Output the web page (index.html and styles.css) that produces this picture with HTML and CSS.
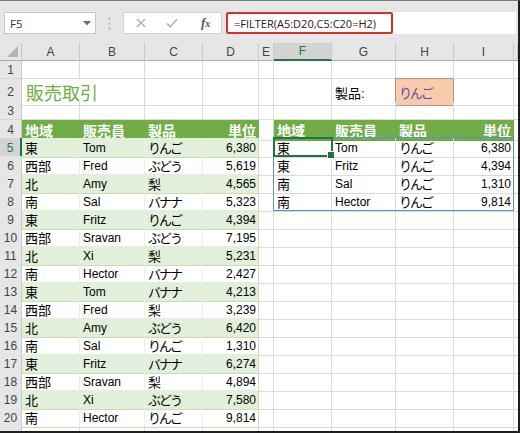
FILE: index.html
```html
<!DOCTYPE html>
<html lang="ja">
<head>
<meta charset="utf-8">
<link rel="stylesheet" href="styles.css">
</head>
<body>
<div class="app">
  <div class="toolbar">
    <div class="namebox"><span>F5</span><svg width="8" height="5" viewBox="0 0 8 5"><polygon points="0,0 8,0 4,4.5" fill="#6b6b6b"/></svg></div>
    <div class="sep"><svg width="3" height="13" viewBox="0 0 3 13"><circle cx="1.5" cy="1.5" r="1" fill="#a8a8a8"/><circle cx="1.5" cy="6.5" r="1" fill="#a8a8a8"/><circle cx="1.5" cy="11.5" r="1" fill="#a8a8a8"/></svg></div>
    <div class="fxbox">
      <svg class="ic-x" width="10" height="10" viewBox="0 0 10 10"><path d="M1 1L9 9M9 1L1 9" stroke="#a9a9a9" stroke-width="1.3" fill="none"/></svg>
      <svg class="ic-ok" width="12" height="10" viewBox="0 0 12 10"><path d="M1 5.5L4.3 8.8L11 1.2" stroke="#a9a9a9" stroke-width="1.3" fill="none"/></svg>
      <span class="fx">f<span class="fxs">x</span></span>
    </div>
    <div class="formula"><div class="hl">=FILTER(A5:D20,C5:C20=H2)</div></div>
  </div>
  <div class="sheet">
    <div class="r hdr">
      <div class="ch corner"><svg width="11" height="11" viewBox="0 0 11 11"><polygon points="11,0 11,11 0,11" fill="#b5b5b5"/></svg></div>
      <div class="ch">A</div><div class="ch">B</div><div class="ch">C</div><div class="ch">D</div><div class="ch">E</div>
      <div class="ch act">F</div><div class="ch">G</div><div class="ch">H</div><div class="ch">I</div><div class="ch"></div>
    </div>
    <div class="r">
      <div class="rh">1</div><div class="c"></div><div class="c"></div><div class="c"></div><div class="c"></div><div class="c"></div><div class="c"></div><div class="c"></div><div class="c"></div><div class="c"></div><div class="c x"></div>
    </div>
    <div class="r tall">
      <div class="rh">2</div><div class="c j title">販売取引</div><div class="c"></div><div class="c"></div><div class="c"></div><div class="c"></div><div class="c lbl">製品:</div><div class="c k h2">りんご</div><div class="c"></div><div class="c x"></div>
    </div>
    <div class="r">
      <div class="rh">3</div><div class="c"></div><div class="c"></div><div class="c"></div><div class="c"></div><div class="c"></div><div class="c"></div><div class="c"></div><div class="c"></div><div class="c"></div><div class="c x"></div>
    </div>
    <div class="r">
      <div class="rh">4</div><div class="c j th">地域</div><div class="c j th">販売員</div><div class="c j th">製品</div><div class="c j th n">単位</div><div class="c e"></div><div class="c j th">地域</div><div class="c j th">販売員</div><div class="c j th">製品</div><div class="c j th n">単位</div><div class="c x"></div>
    </div>
    <div class="r">
      <div class="rh act">5</div><div class="c j t b">東</div><div class="c t b">Tom</div><div class="c k t b">りんご</div><div class="c n t b d">6,380</div><div class="c e"></div>
      <div class="c j anchor">東<div class="spill"></div><div class="sel"></div></div><div class="c">Tom</div><div class="c k">りんご</div><div class="c n">6,380</div><div class="c x"></div>
    </div>
    <div class="r">
      <div class="rh">6</div><div class="c j t">西部</div><div class="c t">Fred</div><div class="c k t">ぶどう</div><div class="c n t d">5,619</div><div class="c e"></div>
      <div class="c j">東</div><div class="c">Fritz</div><div class="c k">りんご</div><div class="c n">4,394</div><div class="c x"></div>
    </div>
    <div class="r">
      <div class="rh">7</div><div class="c j t b">北</div><div class="c t b">Amy</div><div class="c j t b">梨</div><div class="c n t b d">4,565</div><div class="c e"></div>
      <div class="c j">南</div><div class="c">Sal</div><div class="c k">りんご</div><div class="c n">1,310</div><div class="c x"></div>
    </div>
    <div class="r">
      <div class="rh">8</div><div class="c j t">南</div><div class="c t">Sal</div><div class="c k t">バナナ</div><div class="c n t d">5,323</div><div class="c e"></div>
      <div class="c j">南</div><div class="c">Hector</div><div class="c k">りんご</div><div class="c n">9,814</div><div class="c x"></div>
    </div>
    <div class="r">
      <div class="rh">9</div><div class="c j t b">東</div><div class="c t b">Fritz</div><div class="c k t b">りんご</div><div class="c n t b d">4,394</div><div class="c e"></div>
      <div class="c"></div><div class="c"></div><div class="c"></div><div class="c"></div><div class="c x"></div>
    </div>
    <div class="r">
      <div class="rh">10</div><div class="c j t">西部</div><div class="c t">Sravan</div><div class="c k t">ぶどう</div><div class="c n t d">7,195</div><div class="c e"></div>
      <div class="c"></div><div class="c"></div><div class="c"></div><div class="c"></div><div class="c x"></div>
    </div>
    <div class="r">
      <div class="rh">11</div><div class="c j t b">北</div><div class="c t b">Xi</div><div class="c j t b">梨</div><div class="c n t b d">5,231</div><div class="c e"></div>
      <div class="c"></div><div class="c"></div><div class="c"></div><div class="c"></div><div class="c x"></div>
    </div>
    <div class="r">
      <div class="rh">12</div><div class="c j t">南</div><div class="c t">Hector</div><div class="c k t">バナナ</div><div class="c n t d">2,427</div><div class="c e"></div>
      <div class="c"></div><div class="c"></div><div class="c"></div><div class="c"></div><div class="c x"></div>
    </div>
    <div class="r">
      <div class="rh">13</div><div class="c j t b">東</div><div class="c t b">Tom</div><div class="c k t b">バナナ</div><div class="c n t b d">4,213</div><div class="c e"></div>
      <div class="c"></div><div class="c"></div><div class="c"></div><div class="c"></div><div class="c x"></div>
    </div>
    <div class="r">
      <div class="rh">14</div><div class="c j t">西部</div><div class="c t">Fred</div><div class="c j t">梨</div><div class="c n t d">3,239</div><div class="c e"></div>
      <div class="c"></div><div class="c"></div><div class="c"></div><div class="c"></div><div class="c x"></div>
    </div>
    <div class="r">
      <div class="rh">15</div><div class="c j t b">北</div><div class="c t b">Amy</div><div class="c k t b">ぶどう</div><div class="c n t b d">6,420</div><div class="c e"></div>
      <div class="c"></div><div class="c"></div><div class="c"></div><div class="c"></div><div class="c x"></div>
    </div>
    <div class="r">
      <div class="rh">16</div><div class="c j t">南</div><div class="c t">Sal</div><div class="c k t">りんご</div><div class="c n t d">1,310</div><div class="c e"></div>
      <div class="c"></div><div class="c"></div><div class="c"></div><div class="c"></div><div class="c x"></div>
    </div>
    <div class="r">
      <div class="rh">17</div><div class="c j t b">東</div><div class="c t b">Fritz</div><div class="c k t b">バナナ</div><div class="c n t b d">6,274</div><div class="c e"></div>
      <div class="c"></div><div class="c"></div><div class="c"></div><div class="c"></div><div class="c x"></div>
    </div>
    <div class="r">
      <div class="rh">18</div><div class="c j t">西部</div><div class="c t">Sravan</div><div class="c j t">梨</div><div class="c n t d">4,894</div><div class="c e"></div>
      <div class="c"></div><div class="c"></div><div class="c"></div><div class="c"></div><div class="c x"></div>
    </div>
    <div class="r">
      <div class="rh">19</div><div class="c j t b">北</div><div class="c t b">Xi</div><div class="c k t b">ぶどう</div><div class="c n t b d">7,580</div><div class="c e"></div>
      <div class="c"></div><div class="c"></div><div class="c"></div><div class="c"></div><div class="c x"></div>
    </div>
    <div class="r">
      <div class="rh">20</div><div class="c j t">南</div><div class="c t">Hector</div><div class="c k t">りんご</div><div class="c n t d">9,814</div><div class="c e"></div>
      <div class="c"></div><div class="c"></div><div class="c"></div><div class="c"></div><div class="c x"></div>
    </div>
    <div class="r">
      <div class="rh"></div><div class="c"></div><div class="c"></div><div class="c"></div><div class="c d"></div><div class="c e"></div>
      <div class="c"></div><div class="c"></div><div class="c"></div><div class="c"></div><div class="c x"></div>
    </div>
  </div>
</div>
</body>
</html>
```
FILE: styles.css
```css
* { box-sizing: border-box; }
body { margin: 0; background: #fff; }

.app {
  width: 520px;
  height: 433px;
  border-top: 1px solid #7a7a7a;
  border-right: 2px solid #1e1e1e;
  border-bottom: 2px solid #1e1e1e;
  background: #e6e6e6;
  overflow: hidden;
  font-family: "Liberation Sans", "Noto Sans CJK JP", sans-serif;
  font-size: 12px;
  color: #000;
}

/* ---------- formula toolbar ---------- */
.toolbar {
  height: 42px;
  display: flex;
  align-items: flex-start;
  padding: 11px 2px 0 4px;
}
.namebox {
  width: 92px;
  height: 22px;
  background: #fff;
  border: 1px solid #c6c6c6;
  display: flex;
  align-items: center;
  justify-content: space-between;
  padding: 0 4px 0 5px;
  font-family: "Open Sans", "Liberation Sans", sans-serif;
  font-size: 11.5px;
  color: #333;
}
.sep {
  width: 27px;
  height: 22px;
  display: flex;
  align-items: center;
  justify-content: center;
}
.fxbox {
  width: 99px;
  height: 22px;
  background: #fff;
  border: 1px solid #d2d2d2;
  display: flex;
  align-items: center;
  padding-left: 12px;
}
.ic-ok { margin-left: 20px; }
.fx {
  margin-left: 23px;
  font-family: "Liberation Serif", serif;
  font-style: italic;
  font-size: 13px;
  color: #555;
  font-weight: bold;
}
.fxs { font-size: 10px; }
.formula {
  flex: 1;
  height: 22px;
  margin-left: 4px;
  background: #fff;
  display: flex;
}
.hl {
  width: 167px;
  height: 22px;
  border: 2px solid #d5302a;
  border-radius: 2px;
  padding-left: 6px;
  display: flex;
  align-items: center;
  font-family: "Open Sans", "Liberation Sans", sans-serif;
  font-size: 11px;
  color: #222;
  white-space: nowrap;
}

/* ---------- sheet grid ---------- */
.sheet {
  height: 388px;
  background: #fff;
  overflow: hidden;
}
.r {
  display: grid;
  grid-template-columns: 22px 58px 65px 58px 56px 15px 58px 64px 58px 60px 4px;
  height: 18px;
}
.r.tall { height: 23px; }

.ch {
  background: #e6e6e6;
  border-right: 1px solid #c9c9c9;
  border-bottom: 1px solid #acacac;
  color: #444;
  display: flex;
  align-items: center;
  justify-content: center;
  font-size: 12px;
}
.ch.corner {
  align-items: flex-end;
  justify-content: flex-end;
  padding: 0 3px 3px 0;
}
.ch.act {
  background: #d3d3d3;
  color: #217346;
  border-bottom: 2px solid #217346;
}

.rh {
  background: #e6e6e6;
  color: #444;
  border-right: 1px solid #c9c9c9;
  border-bottom: 1px solid #d4d4d4;
  display: flex;
  align-items: center;
  justify-content: center;
}
.rh.act {
  background: #d3d3d3;
  color: #217346;
  border-right: 2px solid #217346;
}

.c {
  border-right: 1px solid #dadada;
  border-bottom: 1px solid #dadada;
  padding: 0 3px;
  display: flex;
  align-items: center;
  white-space: nowrap;
}
.c.x { padding: 0; border-right: 0; }
.n { justify-content: flex-end; padding-right: 2px; }
.j { font-size: 13px; }
.k {
  font-size: 13px;
  letter-spacing: -2px;
}
.lbl { font-size: 13px; }

.title {
  grid-column: span 2;
  font-size: 18px;
  color: #70ad47;
  padding-left: 4px;
}
.h2 {
  background: #f8cbad;
  color: #5f4c9c;
  border-right-color: #a8978a;
  border-bottom-color: #a8978a;
  box-shadow: -1px -1px 0 #a8978a;
}

/* table styling */
.t {
  border-bottom-color: #c6e0b4;
  border-right-color: #e9f0e4;
}
.b { background: #e2efda; }
.d { border-right-color: #c6e0b4; }
.th {
  background: #70ad47;
  color: #fff;
  font-weight: bold;
  font-size: 14px;
  border-right-color: #70ad47;
  border-bottom-color: #6aa543;
}

/* selection + spill overlays */
.anchor { position: relative; }
.spill {
  position: absolute;
  left: -1px;
  top: -1px;
  width: 241px;
  height: 74px;
  border: 1px solid #5b8fd5;
  pointer-events: none;
}
.sel {
  position: absolute;
  left: -1px;
  top: -1px;
  width: 60px;
  height: 20px;
  border: 2px solid #217346;
}
.sel::after {
  content: "";
  position: absolute;
  right: -4px;
  bottom: -4px;
  width: 6px;
  height: 6px;
  background: #217346;
  border: 1px solid #fff;
}
```
